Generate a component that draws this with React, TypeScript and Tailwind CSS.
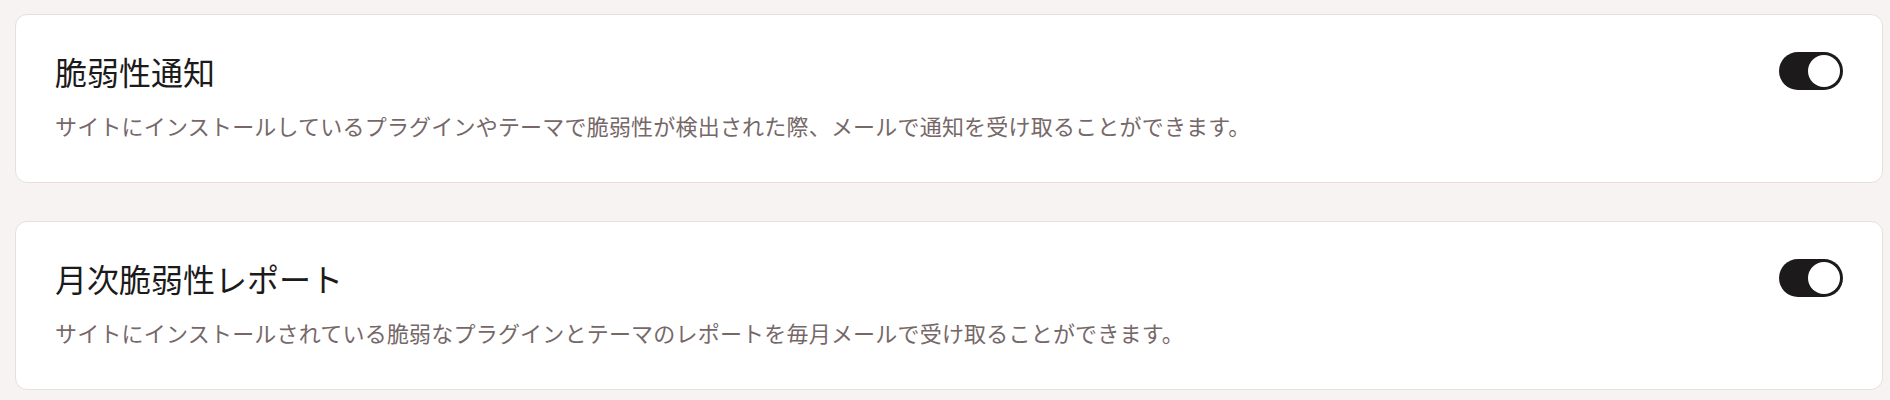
import { useState } from "react";

interface Setting {
  id: string;
  title: string;
  description: string;
}

const settings: Setting[] = [
  {
    id: "vuln",
    title: "脆弱性通知",
    description:
      "サイトにインストールしているプラグインやテーマで脆弱性が検出された際、メールで通知を受け取ることができます。",
  },
  {
    id: "monthly",
    title: "月次脆弱性レポート",
    description:
      "サイトにインストールされている脆弱なプラグインとテーマのレポートを毎月メールで受け取ることができます。",
  },
];

function Toggle({ on, onChange }: { on: boolean; onChange: () => void }) {
  return (
    <button
      type="button"
      role="switch"
      aria-checked={on}
      onClick={onChange}
      className={`flex h-[38px] w-[64px] shrink-0 items-center rounded-full p-[3px] transition-colors ${
        on ? "justify-end bg-[#1c1a1b]" : "justify-start bg-[#d9d1ce]"
      }`}
    >
      <span className="block h-[32px] w-[32px] rounded-full bg-white" />
    </button>
  );
}

export default function App() {
  const [state, setState] = useState<Record<string, boolean>>({
    vuln: true,
    monthly: true,
  });

  return (
    <div
      className="min-h-[400px] bg-[#f7f3f2] pt-[14px] pr-[7px] pl-[15px]"
      style={{ fontFamily: '"Noto Sans CJK JP", "Noto Sans", sans-serif' }}
    >
      <div className="flex flex-col gap-[38px]">
        {settings.map((s) => (
          <div
            key={s.id}
            className="rounded-[12px] border border-[#e8dfdb] bg-white px-[39px] pt-[37px] pb-[41px]"
          >
            <div className="flex items-center justify-between">
              <h3 className="text-[32px] leading-[36px] font-normal text-[#1c1a1a]">
                {s.title}
              </h3>
              <Toggle
                on={state[s.id]}
                onChange={() => setState((p) => ({ ...p, [s.id]: !p[s.id] }))}
              />
            </div>
            <p className="mt-[19px] text-[22px] leading-[32px] tracking-[0.2px] text-[#766868]">
              {s.description}
            </p>
          </div>
        ))}
      </div>
    </div>
  );
}
